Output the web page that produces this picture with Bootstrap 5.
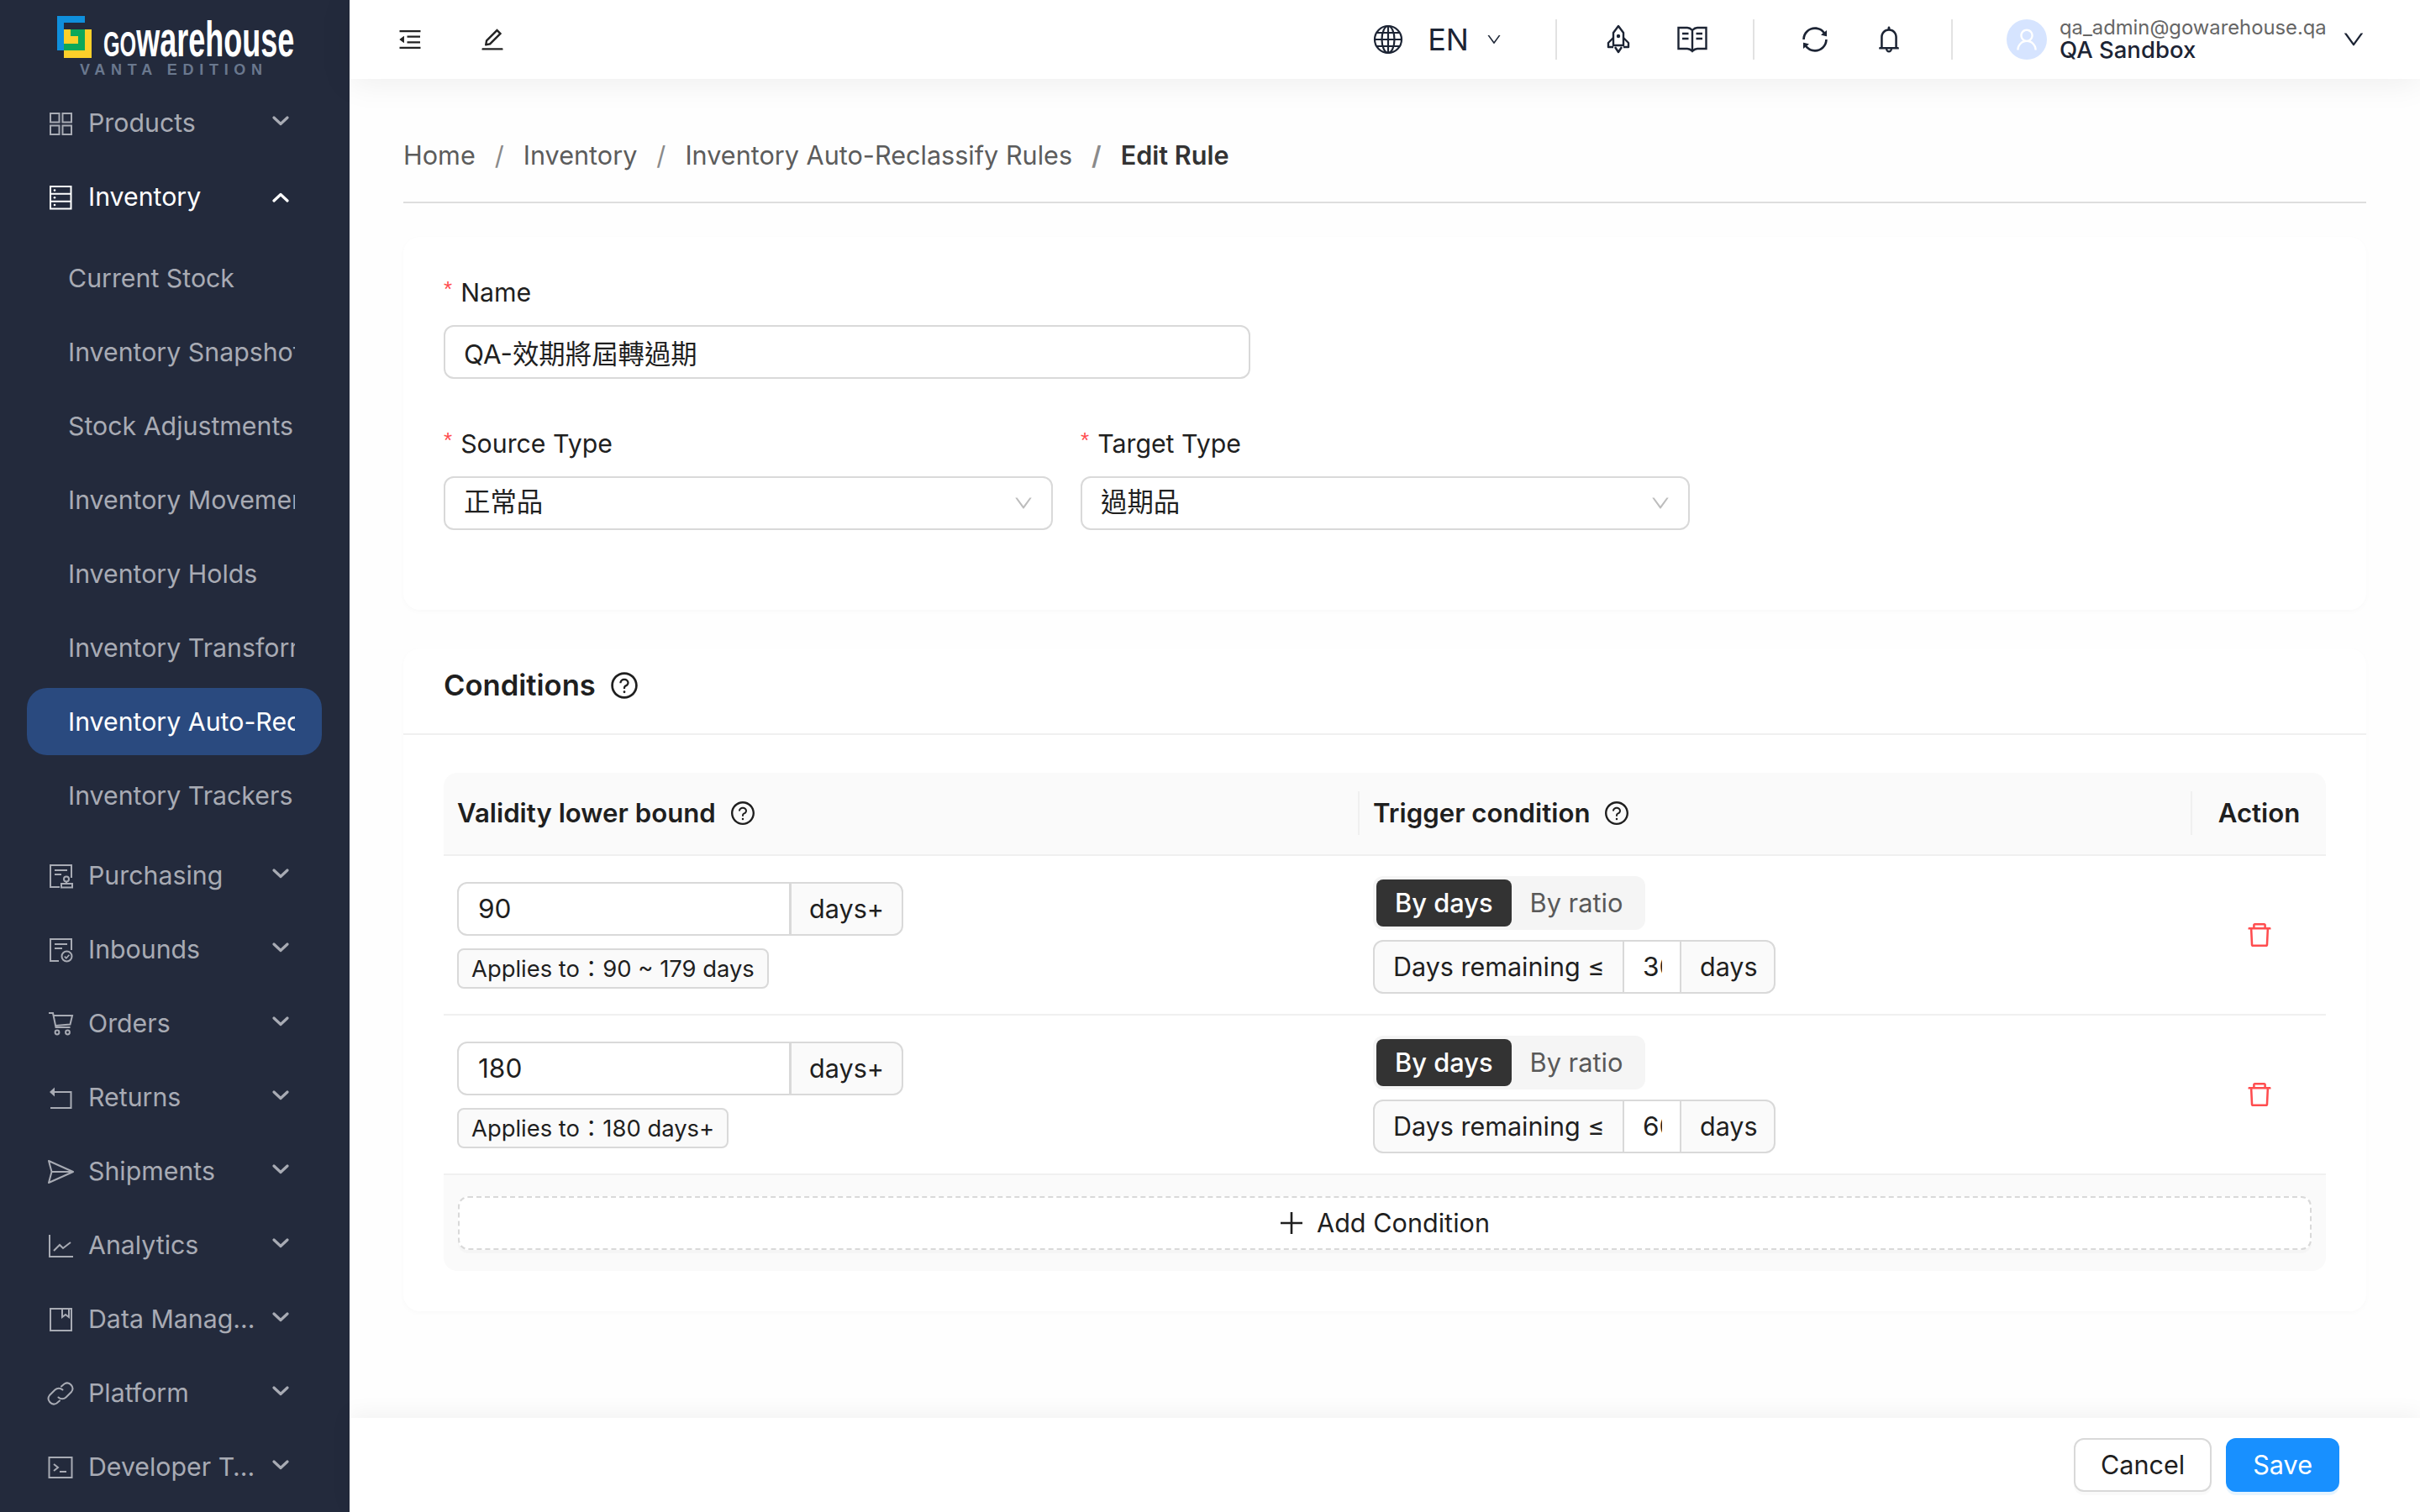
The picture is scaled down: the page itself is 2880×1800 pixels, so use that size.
<!doctype html>
<html lang="en">
<head>
<meta charset="utf-8">
<title>Edit Rule</title>
<link href="https://cdn.jsdelivr.net/npm/bootstrap@5.3.0/dist/css/bootstrap.min.css" rel="stylesheet">
<style>
html,body{height:100%;}
body{font-family:Inter,"Noto Sans CJK TC",sans-serif;font-size:30.3px;color:#1f1f1f;background:#fefefe;overflow:hidden;}
.shell{height:1800px;width:2880px;}
.side{width:416px;flex:0 0 416px;background:#232a3c;color:#a8abb4;overflow:hidden;}
.brand{height:103px;padding:19px 0 0 68px;flex:none;}
.brand-mark{width:41px;height:50px;flex:none;}
.brand-words{margin-left:14px;position:relative;height:70px;}
.brand-name{display:block;font-family:"Liberation Sans",sans-serif;font-weight:700;font-size:60px;line-height:50px;color:#fff;transform:scaleX(.6);transform-origin:0 0;white-space:nowrap;margin-top:3px;}
.brand-name b{font-variant:small-caps;font-weight:700;}
.brand-ed{position:absolute;left:-28px;top:55px;font-family:"Liberation Sans",sans-serif;font-weight:700;font-size:18px;line-height:18px;letter-spacing:6.7px;color:#6a788e;white-space:nowrap;}
.mitem{height:88px;padding:0 72px 0 56px;flex:none;}
.mitem .mi{width:32px;height:32px;margin-right:17px;flex:none;}
.mitem .ml{flex:1;min-width:0;white-space:nowrap;overflow:hidden;text-overflow:ellipsis;}
.mitem .mc{width:20px;height:12px;flex:none;margin:-7px 0 0 18px;}
.mitem.open{color:#fff;}
.mitem.open .mc{margin-top:0;}
.subm{padding:12px 0 12px;gap:8px;flex:none;}
.subit{height:80px;margin:0 33px 0 32px;padding-left:49px;line-height:80px;border-radius:24px;flex:none;}
.subit span{display:block;width:270px;overflow:hidden;white-space:nowrap;}
.subit.on{background:#2a4a7f;color:#fff;}
.mainc{min-width:0;}
.topb{height:94px;flex:none;background:#fff;padding:0 64px 0 56px;position:relative;z-index:2;box-shadow:0 4px 40px rgba(0,0,0,.07);color:#1c2434;}
.tico{width:32px;height:32px;flex:none;color:#222;}
.tico-edit{margin-left:66px;margin-right:auto;}
.tico2{width:36px;height:36px;flex:none;color:#1c2434;}
.tgap{margin-left:52px;}
.vsep{width:2px;height:48px;background:#e2e2e2;flex:none;}
.vsep1{margin:0 55px 0 63px;}
.vsep2{margin:0 54px 0 54px;}
.vsep3{margin:0 64px 0 56px;}
.langt{font-size:36px;line-height:44px;margin-left:29px;}
.langc{width:20px;height:20px;margin-left:20px;flex:none;}
.usr-av{width:48px;height:48px;border-radius:50%;background:#d6e4ff;color:#fff;flex:none;}
.usr-av svg{width:32px;height:32px;}
.usr-box{margin-left:15px;width:318px;flex:none;}
.usr-mail{font-size:23.8px;line-height:24px;color:#666;white-space:nowrap;}
.usr-org{font-size:27.5px;line-height:28px;font-weight:500;white-space:nowrap;}
.usr-chev{width:30px;height:30px;margin-left:17px;flex:none;}
.pagebody{padding:0 64px;min-height:0;overflow:hidden;}
.crumbs{height:148px;border-bottom:2px solid #dedede;padding-top:66px;margin-bottom:40px;}
.breadcrumb{margin:0;font-size:30.6px;line-height:50px;--bs-breadcrumb-item-padding-x:23px;--bs-breadcrumb-divider-color:#8a8a8a;--bs-breadcrumb-item-active-color:#333;}
.breadcrumb a{color:#5c5c5c;text-decoration:none;}
.breadcrumb .active{font-weight:600;}
.panel{border:0;border-radius:20px;box-shadow:0 2px 6px rgba(0,0,0,.025);background:#fff;}
.panel-a{height:444px;padding:44px 48px 0;margin-bottom:46px;}
.flab{display:block;font-size:30.3px;line-height:44px;margin-bottom:15px;}
.flab i{color:#ff4d4f;font-style:normal;font-size:26px;margin-right:10px;position:relative;top:-6px;font-family:"Liberation Sans",sans-serif;}
.finput,.fselect{height:64px;border:2px solid #d9d9d9;border-radius:12px;font-size:31.4px;padding:0 22px;color:#1f1f1f;background:#fff;display:flex;align-items:center;box-shadow:none;}
.w-name{width:960px;margin-bottom:55px;}
.w-sel{width:725px;}
.selgap{gap:33px;}
.fselect svg{width:26px;height:26px;color:#bdbdbd;margin-left:auto;margin-right:-2px;}
.panel-h{height:103px;padding:0 48px 14px;border-bottom:2px solid #f0f0f0;font-size:34.6px;font-weight:600;gap:16px;}
.qm{width:36px;height:36px;flex:none;}
.qm-s{width:32px;height:32px;flex:none;}
.panel-b{padding:45px 48px 48px;}
.rtab{width:2240px;table-layout:fixed;margin:0;border-collapse:separate;border-spacing:0;--bs-table-bg:transparent;color:inherit;}
.rtab .c1{width:1090px;}.rtab .c2{width:991px;}.rtab .c3{width:159px;}
.rtab thead th{height:99px;background:#fafafa;border-bottom:2px solid #f0f0f0;font-weight:600;font-size:31.2px;padding:0 0 0 16px;position:relative;vertical-align:middle;}
.rtab thead th:first-child{border-top-left-radius:16px;}
.rtab thead th:last-child{border-top-right-radius:16px;text-align:center;padding:0;}
.rtab thead th+th::before{content:"";position:absolute;left:-2px;top:22px;height:52px;width:2px;background:#f0f0f0;}
.rtab tbody td{height:190px;border-bottom:2px solid #f0f0f0;padding:0 16px;vertical-align:middle;background:#fff;}
.rtab tfoot td{height:114px;background:#fafafa;padding:0 17px 0;border:0;border-radius:0 0 16px 16px;}
.qgrp{width:531px;height:64px;flex-wrap:nowrap;}
.qgrp .form-control{height:64px;border:2px solid #d9d9d9;border-radius:12px 0 0 12px;font-size:31.6px;padding:0 23px;color:#1f1f1f;box-shadow:none;}
.qgrp .input-group-text{height:64px;width:135px;flex:none;justify-content:center;border:2px solid #d9d9d9;border-radius:0 12px 12px 0;background:#fafafa;font-size:30.6px;padding:0;color:#1f1f1f;}
.applies{display:inline-block;height:48px;line-height:44px;border:2px solid #d9d9d9;border-radius:8px;background:#fafafa;font-size:27.4px;padding:0 15px;margin-top:15px;color:#1f1f1f;white-space:nowrap;}
.segm{display:inline-flex;height:64px;padding:4px;background:#f5f5f5;border-radius:12px;font-size:30.8px;}
.segm span{height:56px;line-height:56px;padding:0 22px;border-radius:8px;color:#595959;}
.segm span.sel{background:#333;color:#fff;font-weight:500;}
.trig{display:flex;width:479px;height:64px;margin-top:12px;border:2px solid #d9d9d9;border-radius:12px;font-size:30.5px;background:#fafafa;overflow:hidden;}
.trig .tlabel{padding:0 0 0 22px;line-height:60px;white-space:nowrap;flex:none;width:295px;}
.trig .tval{width:70px;flex:none;border:0;border-left:2px solid #d9d9d9;border-right:2px solid #d9d9d9;padding:0 21px 0 22px;background:#fff;font-size:31.6px;color:#1f1f1f;outline:none;}
.trig .tunit{padding-left:22px;line-height:60px;}
.trash{width:36px;height:36px;color:#ff4d4f;display:block;margin:0 auto;}
.addb{height:64px;width:100%;border:2px dashed #d9d9d9;border-radius:12px;background:#fff;font-size:30.6px;color:#1f1f1f;box-shadow:0 4px 0 rgba(0,0,0,.02);gap:16px;padding:0;}
.addb:hover,.addb:active{border:2px dashed #d9d9d9;background:#fff;color:#1f1f1f;}
.addb svg{width:28px;height:28px;}
.footb{height:112px;flex:none;background:#fff;box-shadow:0 -6px 24px rgba(0,0,0,.05);padding:0 96px 0 0;gap:17px;position:relative;z-index:2;}
.fbtn{height:64px;font-size:30.6px;border-radius:12px;padding:0 30px;line-height:60px;box-shadow:0 4px 0 rgba(0,0,0,.02);}
.fbtn-c{border:2px solid #d9d9d9;background:#fff;color:#1f1f1f;}
.fbtn-s{border:2px solid #1890ff;background:#1890ff;color:#fff;box-shadow:0 4px 0 rgba(5,145,255,.1);}
</style>
</head>
<body>
<svg width="0" height="0" class="d-block position-absolute">
<defs>
<symbol id="i-chev" viewBox="0 0 20 12"><path d="M2 2l8 7.5L18 2" fill="none" stroke="currentColor" stroke-width="3.2" stroke-linecap="round" stroke-linejoin="round"/></symbol>
<symbol id="i-chevu" viewBox="0 0 20 12"><path d="M2 10l8-7.5L18 10" fill="none" stroke="currentColor" stroke-width="3.2" stroke-linecap="round" stroke-linejoin="round"/></symbol>
<symbol id="i-thin" viewBox="0 0 1024 1024"><path d="M884 256h-75c-5.1 0-9.9 2.5-12.9 6.6L512 654.2 227.9 262.6c-3-4.1-7.8-6.6-12.9-6.6h-75c-6.5 0-10.3 7.4-6.5 12.7l352.6 486.1c12.8 17.6 39 17.6 51.7 0l352.6-486.1c3.9-5.3.1-12.7-6.4-12.7z" fill="currentColor"/></symbol>
<symbol id="i-q" viewBox="0 0 1024 1024"><path fill="currentColor" d="M512 64C264.6 64 64 264.6 64 512s200.6 448 448 448 448-200.6 448-448S759.4 64 512 64zm0 820c-205.4 0-372-166.6-372-372s166.6-372 372-372 372 166.6 372 372-166.6 372-372 372z"/><path fill="currentColor" d="M623.6 316.7C593.6 290.4 554 276 512 276s-81.6 14.5-111.6 40.7C369.2 344 352 380.7 352 420v7.6c0 4.4 3.6 8 8 8h48c4.4 0 8-3.6 8-8V420c0-44.1 43.1-80 96-80s96 35.9 96 80c0 31.1-22 59.6-56.1 72.7-21.2 8.1-39.2 22.3-52.1 40.9-13.1 19-19.9 41.8-19.9 64.9V620c0 4.4 3.6 8 8 8h48c4.4 0 8-3.6 8-8v-22.7a48.3 48.3 0 0 1 30.9-44.8c59-22.7 97.1-74.7 97.1-132.5.1-39.3-17.1-76-48.3-103.3zM472 732a40 40 0 1 0 80 0 40 40 0 1 0-80 0z"/></symbol>
<symbol id="i-del" viewBox="0 0 1024 1024"><path fill="currentColor" d="M360 184h-8c4.4 0 8-3.6 8-8v8h304v-8c0 4.4 3.6 8 8 8h-8v72h72v-80c0-35.3-28.7-64-64-64H352c-35.3 0-64 28.7-64 64v80h72v-72zm504 72H160c-17.7 0-32 14.3-32 32v32c0 4.4 3.6 8 8 8h60.4l24.7 523c1.6 34.1 29.8 61 63.9 61h454c34.2 0 62.3-26.8 63.9-61l24.7-523H888c4.4 0 8-3.6 8-8v-32c0-17.7-14.3-32-32-32zM731.3 840H292.7l-24.2-512h487l-24.2 512z"/></symbol>
<symbol id="i-plus" viewBox="0 0 28 28"><path d="M14 1v26M1 14h26" stroke="currentColor" stroke-width="2.6" fill="none"/></symbol>
<symbol id="i-prod" viewBox="0 0 32 32"><g fill="none" stroke="currentColor" stroke-width="2"><rect x="4" y="4" width="10.5" height="10.5"/><rect x="18.5" y="4" width="10.5" height="10.5"/><rect x="4" y="18.5" width="10.5" height="10.5"/><rect x="18.5" y="18.5" width="10.5" height="10.5"/></g></symbol>
<symbol id="i-inv" viewBox="0 0 32 32"><g fill="none" stroke="currentColor" stroke-width="2"><rect x="4" y="3" width="24.5" height="26.5"/><path d="M4 11.8h24.5M4 20.7h24.5"/></g><circle cx="9" cy="7.5" r="1.3" fill="currentColor"/><circle cx="9" cy="16.2" r="1.3" fill="currentColor"/><circle cx="9" cy="25" r="1.3" fill="currentColor"/></symbol>
<symbol id="i-purch" viewBox="0 0 32 32"><g fill="none" stroke="currentColor" stroke-width="2"><path d="M15 29H4V3h25v15"/><path d="M9 9h15M9 14h8"/><circle cx="23" cy="19.5" r="3"/><path d="M23 22.5v2M17 25h13v4.500H17z"/></g></symbol>
<symbol id="i-inb" viewBox="0 0 32 32"><g fill="none" stroke="currentColor" stroke-width="2"><path d="M14 29H4V3h25v13"/><path d="M9 9h15M9 14h9"/><circle cx="23.500" cy="23.500" r="6"/><path d="M20.800 23.700l2 2 3.600-4" stroke-width="1.700"/></g></symbol>
<symbol id="i-cart" viewBox="0 0 32 32"><g fill="none" stroke="currentColor" stroke-width="2"><path d="M2 3h5l3.500 17h17"/><path d="M7.800 6H30l-2.500 10.500-17.300 1.500"/><circle cx="12" cy="26" r="2.400"/><circle cx="24.500" cy="26" r="2.400"/></g></symbol>
<symbol id="i-ret" viewBox="0 0 32 32"><g fill="none" stroke="currentColor" stroke-width="2"><path d="M8 9h20.500v19H4"/></g><path d="M9 3.500v11L3 9z" fill="currentColor"/></symbol>
<symbol id="i-send" viewBox="0 0 32 32"><path d="M2 3l29 13L2 29l3.500-13zM5.500 16H31" fill="none" stroke="currentColor" stroke-width="2" stroke-linejoin="round"/></symbol>
<symbol id="i-chart" viewBox="0 0 32 32"><path d="M3 3v26h28M8 22l7-7 4 4 9-7" fill="none" stroke="currentColor" stroke-width="2"/></symbol>
<symbol id="i-book" viewBox="0 0 32 32"><path d="M4 3h25v26H4zM18 3v10l4-3 4 3V3" fill="none" stroke="currentColor" stroke-width="2"/></symbol>
<symbol id="i-link" viewBox="0 0 32 32"><g fill="none" stroke="currentColor" stroke-width="2" stroke-linecap="round"><path d="M17 7.500l3.500-3a6.500 6.500 0 0 1 8.500 9.500l-6.500 6.500a6.500 6.500 0 0 1-9 0"/><path d="M15 24.500l-3.500 3a6.500 6.500 0 0 1-8.500-9.500l6.500-6.500a6.500 6.500 0 0 1 9 0"/></g></symbol>
<symbol id="i-term" viewBox="0 0 32 32"><g fill="none" stroke="currentColor" stroke-width="2"><rect x="2.500" y="4" width="27" height="24"/><path d="M8 12l5 4-5 4M15 21h8"/></g></symbol>
<symbol id="i-fold" viewBox="0 0 1024 1024"><path fill="currentColor" d="M408 442h480c4.400 0 8-3.600 8-8v-56c0-4.400-3.600-8-8-8H408c-4.400 0-8 3.600-8 8v56c0 4.400 3.600 8 8 8zm-8 204c0 4.400 3.600 8 8 8h480c4.400 0 8-3.600 8-8v-56c0-4.400-3.600-8-8-8H408c-4.400 0-8 3.600-8 8v56zm504-486H120c-4.400 0-8 3.600-8 8v56c0 4.400 3.600 8 8 8h784c4.400 0 8-3.600 8-8v-56c0-4.400-3.600-8-8-8zm0 632H120c-4.400 0-8 3.600-8 8v56c0 4.400 3.600 8 8 8h784c4.400 0 8-3.600 8-8v-56c0-4.400-3.600-8-8-8zM115.400 518.900L271.700 642c5.800 4.600 14.400.5 14.400-6.900V388.900c0-7.400-8.500-11.500-14.400-6.900L115.400 505.100a8.740 8.740 0 0 0 0 13.800z"/></symbol>
<symbol id="i-edit" viewBox="0 0 1024 1024"><path fill="currentColor" d="M257.700 752c2 0 4-.2 6-.5L431.900 722c2-.4 3.900-1.300 5.300-2.800l423.900-423.900a9.960 9.960 0 0 0 0-14.100L694.900 114.900c-1.900-1.900-4.400-2.900-7.100-2.900s-5.200 1-7.100 2.900L256.800 538.800c-1.500 1.500-2.400 3.300-2.800 5.300l-29.500 168.200a33.500 33.500 0 0 0 9.400 29.800c6.600 6.400 14.900 9.900 23.800 9.900zm67.400-174.400L687.800 215l73.300 73.300-362.700 362.600-88.900 15.700 15.600-89zM880 836H144c-17.700 0-32 14.300-32 32v36c0 4.400 3.600 8 8 8h784c4.400 0 8-3.600 8-8v-36c0-17.700-14.300-32-32-32z"/></symbol>
<symbol id="i-globe" viewBox="0 0 36 36"><g fill="none" stroke="currentColor" stroke-width="2.200"><circle cx="18" cy="18" r="16"/><ellipse cx="18" cy="18" rx="7.500" ry="16"/><path d="M18 2v32M2 18h32M4.500 10h27M4.500 26h27"/></g></symbol>
<symbol id="i-rocket" viewBox="0 0 36 36"><g fill="none" stroke="currentColor" stroke-width="2.400" stroke-linejoin="round"><path d="M18 2l-6 8v15h12V10z"/><path d="M12 16l-6 6v5h6M24 16l6 6v5h-6"/><path d="M14 27l4 6 4-6"/></g><circle cx="18" cy="14" r="2.200" fill="currentColor"/></symbol>
<symbol id="i-read" viewBox="0 0 36 36"><g fill="none" stroke="currentColor" stroke-width="2.400"><path d="M18 7c-2-2-4-3-6-3H1.500v25H12c2 0 4 1 6 3 2-2 4-3 6-3h10.500V4H24c-2 0-4 1-6 3zM18 7v25"/><path d="M6 11h7.500M6 17h7.500M22.500 11H30M22.500 17H30"/></g></symbol>
<symbol id="i-sync" viewBox="0 0 1024 1024"><path fill="currentColor" d="M168 504.200c1-43.700 10-86.100 26.900-126 17.300-41 42.100-77.700 73.700-109.400S337 212.300 378 195c42.400-17.900 87.400-27 133.900-27s91.500 9.100 133.800 27A341.500 341.500 0 0 1 755 268.800c9.900 9.900 19.200 20.400 27.800 31.400l-60.200 47a8 8 0 0 0 3 14.100l175.700 43c5 1.200 9.900-2.600 9.900-7.700l.8-180.900c0-6.700-7.700-10.500-12.900-6.300l-56.400 44.100C765.800 155.100 646.200 92 511.800 92 282.700 92 96.300 275.600 92 503.800a8 8 0 0 0 8 8.200h60c4.400 0 7.900-3.500 8-7.800zm756 7.800h-60c-4.400 0-7.900 3.500-8 7.800-1 43.700-10 86.100-26.900 126-17.300 41-42.100 77.800-73.700 109.400A342.450 342.450 0 0 1 512.100 856a342.240 342.240 0 0 1-243.200-100.800c-9.900-9.900-19.200-20.400-27.800-31.400l60.200-47a8 8 0 0 0-3-14.100l-175.700-43c-5-1.200-9.900 2.600-9.900 7.700l-.7 181c0 6.700 7.700 10.500 12.900 6.300l56.400-44.100C258.200 868.900 377.800 932 512.200 932c229.200 0 415.500-183.700 419.800-411.800a8 8 0 0 0-8-8.200z"/></symbol>
<symbol id="i-bell" viewBox="0 0 1024 1024"><path fill="currentColor" d="M816 768h-24V428c0-141.100-104.300-257.700-240-277.100V112c0-22.100-17.900-40-40-40s-40 17.900-40 40v38.900c-135.700 19.400-240 136-240 277.100v340h-24c-17.700 0-32 14.300-32 32v32c0 4.400 3.600 8 8 8h216c0 61.800 50.200 112 112 112s112-50.200 112-112h216c4.400 0 8-3.600 8-8v-32c0-17.700-14.300-32-32-32zM512 888c-26.500 0-48-21.500-48-48h96c0 26.500-21.500 48-48 48zM304 768V428c0-55.600 21.600-107.800 60.900-147.100S456.400 220 512 220c55.600 0 107.800 21.600 147.100 60.900S720 372.400 720 428v340H304z"/></symbol>
<symbol id="i-user" viewBox="0 0 1024 1024"><path fill="currentColor" d="M858.500 763.600a374 374 0 0 0-80.600-119.500 375.630 375.630 0 0 0-119.500-80.600c-.4-.2-.8-.3-1.200-.5C719.500 518 760 444.700 760 362c0-137-111-248-248-248S264 225 264 362c0 82.700 40.500 156 102.800 201.100-.4.200-.8.300-1.200.5-44.800 18.900-85 46-119.500 80.600a375.630 375.630 0 0 0-80.600 119.500A371.700 371.700 0 0 0 136 901.800a8 8 0 0 0 8 8.200h60c4.400 0 7.900-3.500 8-7.800 2-77.200 33-149.500 87.800-204.300 56.700-56.700 132-87.900 212.200-87.900s155.500 31.200 212.200 87.900C779 752.700 810 825 812 902.200c.1 4.400 3.600 7.800 8 7.800h60a8 8 0 0 0 8-8.200c-1-47.800-10.900-94.300-29.500-138.200zM512 534c-45.900 0-89.100-17.900-121.600-50.400S340 407.900 340 362c0-45.900 17.900-89.100 50.400-121.600S466.100 190 512 190s89.100 17.900 121.600 50.400S684 316.100 684 362c0 45.900-17.900 89.100-50.400 121.600S557.900 534 512 534z"/></symbol>
</defs>
</svg>
<div class="shell d-flex">
  <aside class="side d-flex flex-column">
    <div class="brand d-flex">
      <svg class="brand-mark" viewBox="0 0 41 50"><path d="M0 0h33v8H8v33H0z" fill="#0f8fdc"/><rect x="8" y="16" width="33" height="34" fill="#fdd02a"/><path d="M16 16h17v25H8v-8h17v-9h-9z" fill="#0ca85a"/></svg>
      <div class="brand-words"><span class="brand-name"><b>go</b>warehouse</span><span class="brand-ed">VANTA EDITION</span></div>
    </div>
    <div class="mitem d-flex align-items-center"><svg class="mi"><use href="#i-prod"/></svg><span class="ml">Products</span><svg class="mc"><use href="#i-chev"/></svg></div>
    <div class="mitem open d-flex align-items-center"><svg class="mi"><use href="#i-inv"/></svg><span class="ml">Inventory</span><svg class="mc"><use href="#i-chevu"/></svg></div>
    <div class="subm d-flex flex-column">
      <div class="subit"><span>Current Stock</span></div>
      <div class="subit"><span>Inventory Snapshots</span></div>
      <div class="subit"><span>Stock Adjustments</span></div>
      <div class="subit"><span>Inventory Movements</span></div>
      <div class="subit"><span>Inventory Holds</span></div>
      <div class="subit"><span>Inventory Transforms</span></div>
      <div class="subit on"><span>Inventory Auto-Reclassify Rules</span></div>
      <div class="subit"><span>Inventory Trackers</span></div>
    </div>
    <div class="mitem d-flex align-items-center"><svg class="mi"><use href="#i-purch"/></svg><span class="ml">Purchasing</span><svg class="mc"><use href="#i-chev"/></svg></div>
    <div class="mitem d-flex align-items-center"><svg class="mi"><use href="#i-inb"/></svg><span class="ml">Inbounds</span><svg class="mc"><use href="#i-chev"/></svg></div>
    <div class="mitem d-flex align-items-center"><svg class="mi"><use href="#i-cart"/></svg><span class="ml">Orders</span><svg class="mc"><use href="#i-chev"/></svg></div>
    <div class="mitem d-flex align-items-center"><svg class="mi"><use href="#i-ret"/></svg><span class="ml">Returns</span><svg class="mc"><use href="#i-chev"/></svg></div>
    <div class="mitem d-flex align-items-center"><svg class="mi"><use href="#i-send"/></svg><span class="ml">Shipments</span><svg class="mc"><use href="#i-chev"/></svg></div>
    <div class="mitem d-flex align-items-center"><svg class="mi"><use href="#i-chart"/></svg><span class="ml">Analytics</span><svg class="mc"><use href="#i-chev"/></svg></div>
    <div class="mitem d-flex align-items-center"><svg class="mi"><use href="#i-book"/></svg><span class="ml">Data Management</span><svg class="mc"><use href="#i-chev"/></svg></div>
    <div class="mitem d-flex align-items-center"><svg class="mi"><use href="#i-link"/></svg><span class="ml">Platform</span><svg class="mc"><use href="#i-chev"/></svg></div>
    <div class="mitem d-flex align-items-center"><svg class="mi"><use href="#i-term"/></svg><span class="ml">Developer Tools</span><svg class="mc"><use href="#i-chev"/></svg></div>
  </aside>
  <main class="mainc flex-grow-1 d-flex flex-column">
    <header class="topb d-flex align-items-center">
      <svg class="tico"><use href="#i-fold"/></svg>
      <svg class="tico tico-edit"><use href="#i-edit"/></svg>
      <svg class="tico2"><use href="#i-globe"/></svg>
      <span class="langt">EN</span>
      <svg class="langc"><use href="#i-thin"/></svg>
      <span class="vsep vsep1"></span>
      <svg class="tico2"><use href="#i-rocket"/></svg>
      <svg class="tico2 tgap"><use href="#i-read"/></svg>
      <span class="vsep vsep2"></span>
      <svg class="tico2"><use href="#i-sync"/></svg>
      <svg class="tico2 tgap"><use href="#i-bell"/></svg>
      <span class="vsep vsep3"></span>
      <span class="usr-av d-flex align-items-center justify-content-center"><svg><use href="#i-user"/></svg></span>
      <div class="usr-box">
        <div class="usr-mail">qa_admin@gowarehouse.qa</div>
        <div class="usr-org">QA Sandbox</div>
      </div>
      <svg class="usr-chev"><use href="#i-thin"/></svg>
    </header>
    <div class="pagebody flex-grow-1">
      <nav class="crumbs" aria-label="breadcrumb">
        <ol class="breadcrumb">
          <li class="breadcrumb-item"><a href="#">Home</a></li>
          <li class="breadcrumb-item"><a href="#">Inventory</a></li>
          <li class="breadcrumb-item"><a href="#">Inventory Auto-Reclassify Rules</a></li>
          <li class="breadcrumb-item active" aria-current="page">Edit Rule</li>
        </ol>
      </nav>
      <section class="card panel panel-a">
        <label class="flab"><i>*</i>Name</label>
        <input class="form-control finput w-name" value="QA-效期將屆轉過期">
        <div class="d-flex selgap">
          <div><label class="flab"><i>*</i>Source Type</label><div class="fselect w-sel">正常品<svg><use href="#i-thin"/></svg></div></div>
          <div><label class="flab"><i>*</i>Target Type</label><div class="fselect w-sel">過期品<svg><use href="#i-thin"/></svg></div></div>
        </div>
      </section>
      <section class="card panel">
        <div class="panel-h d-flex align-items-center">Conditions <svg class="qm"><use href="#i-q"/></svg></div>
        <div class="panel-b">
          <table class="table rtab">
            <colgroup><col class="c1"><col class="c2"><col class="c3"></colgroup>
            <thead><tr>
              <th><span class="d-inline-flex align-items-center gap-3">Validity lower bound <svg class="qm-s"><use href="#i-q"/></svg></span></th>
              <th><span class="d-inline-flex align-items-center gap-3">Trigger condition <svg class="qm-s"><use href="#i-q"/></svg></span></th>
              <th>Action</th>
            </tr></thead>
            <tbody>
              <tr>
                <td><div class="input-group qgrp"><input class="form-control" value="90"><span class="input-group-text">days+</span></div><span class="applies">Applies to：90 ~ 179 days</span></td>
                <td><div class="segm"><span class="sel">By days</span><span>By ratio</span></div><div class="trig"><span class="tlabel">Days remaining ≤</span><input class="tval" value="30"><span class="tunit">days</span></div></td>
                <td><svg class="trash"><use href="#i-del"/></svg></td>
              </tr>
              <tr>
                <td><div class="input-group qgrp"><input class="form-control" value="180"><span class="input-group-text">days+</span></div><span class="applies">Applies to：180 days+</span></td>
                <td><div class="segm"><span class="sel">By days</span><span>By ratio</span></div><div class="trig"><span class="tlabel">Days remaining ≤</span><input class="tval" value="60"><span class="tunit">days</span></div></td>
                <td><svg class="trash"><use href="#i-del"/></svg></td>
              </tr>
            </tbody>
            <tfoot><tr><td colspan="3"><button type="button" class="btn addb d-flex align-items-center justify-content-center"><svg><use href="#i-plus"/></svg>Add Condition</button></td></tr></tfoot>
          </table>
        </div>
      </section>
    </div>
    <footer class="footb d-flex align-items-center justify-content-end">
      <button type="button" class="btn fbtn fbtn-c">Cancel</button>
      <button type="button" class="btn fbtn fbtn-s">Save</button>
    </footer>
  </main>
</div>
<script src="https://cdn.jsdelivr.net/npm/bootstrap@5.3.0/dist/js/bootstrap.bundle.min.js"></script>
</body>
</html>
